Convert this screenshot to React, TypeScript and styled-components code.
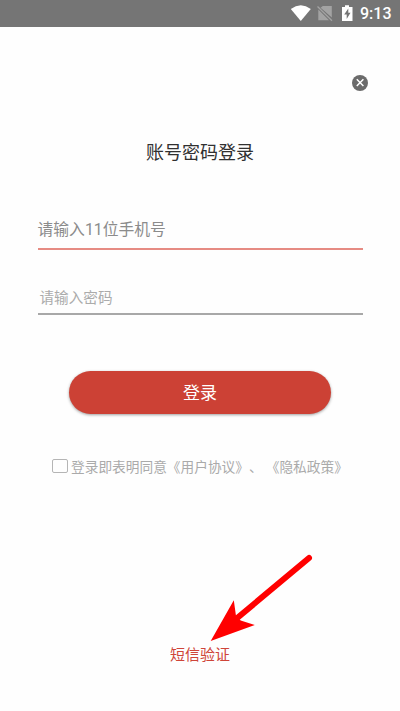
import React from "react";
import styled, { createGlobalStyle } from "styled-components";

const GlobalStyle = createGlobalStyle`
  * { box-sizing: border-box; }
  body {
    margin: 0;
    background: #fefefe;
    font-family: Roboto, "Noto Sans CJK SC", sans-serif;
    font-kerning: none;
  }
`;

const Screen = styled.div`
  position: relative;
  display: flex;
  flex-direction: column;
  width: 400px;
  height: 711px;
  overflow: hidden;
  background: #fefefe;
`;

const StatusBar = styled.header`
  display: flex;
  align-items: center;
  justify-content: flex-end;
  flex: none;
  height: 27px;
  padding-right: 9px;
  background: #757575;
`;

const StatusIcons = styled.svg`
  display: block;
  width: 68px;
  height: 27px;
`;

const Clock = styled.time`
  width: 31px;
  margin-left: 2px;
  color: #fff;
  font-size: 16px;
  font-weight: 500;
  line-height: 27px;
  white-space: nowrap;
`;

const CloseRow = styled.div`
  display: flex;
  justify-content: flex-end;
  padding: 47px 31px 0 0;
`;

const CloseButton = styled.button`
  display: block;
  width: 18px;
  height: 18px;
  padding: 0;
  border: 0;
  background: none;
`;

const Title = styled.h1`
  margin: 47px 0 0;
  color: #303030;
  font-size: 18px;
  font-weight: 400;
  line-height: 28px;
  text-align: center;
`;

const Fields = styled.form`
  display: flex;
  flex-direction: column;
  padding: 51px 37.5px 0;
`;

const Field = styled.label<{ $size: number; $ink: string; $line: string; $inset?: number; $height: number; $top?: number }>`
  display: block;
  height: ${(p) => p.$height}px;
  margin-top: ${(p) => p.$top ?? 0}px;
  padding-left: ${(p) => p.$inset ?? 0}px;
  border-bottom: 2px solid ${(p) => p.$line};
  color: ${(p) => p.$ink};
  font-size: ${(p) => p.$size}px;
  line-height: 23px;
`;

const LoginButton = styled.button`
  flex: none;
  align-self: center;
  width: 262px;
  height: 43px;
  margin-top: 56px;
  padding: 2px 0 0;
  border: 0;
  border-radius: 22px;
  background: #cc4135;
  box-shadow: 0 1px 3px rgba(0, 0, 0, 0.38);
  color: #fff;
  font-family: inherit;
  font-size: 17px;
  line-height: 41px;
`;

const Agreement = styled.div`
  display: flex;
  align-items: center;
  height: 24px;
  margin-top: 40px;
  padding-left: 52px;
  color: #aaa;
  font-size: 13.7px;
  line-height: 24px;
  white-space: nowrap;
`;

const Checkbox = styled.span`
  flex: none;
  width: 16px;
  height: 14px;
  margin-right: 3px;
  border: 1px solid #b5b5b5;
  border-radius: 2px;
`;

const AgreementText = styled.span`
  font-family: "Noto Sans CJK SC", sans-serif;
  font-feature-settings: "chws" 0, "halt" 0, "kern" 0;
  text-spacing-trim: space-all;
`;

const SmsLink = styled.a`
  align-self: center;
  margin-top: 165px;
  color: #cf4539;
  font-size: 15px;
  line-height: 24px;
`;

const Pointer = styled.svg`
  position: absolute;
  left: 200px;
  top: 545px;
  width: 120px;
  height: 105px;
  pointer-events: none;
`;

export default function App() {
  return (
    <Screen>
      <GlobalStyle />
      <StatusBar>
        <StatusIcons viewBox="0 0 68 27">
          <path d="M.8 8.900Q10.800 1.800 20.800 8.900L10.800 20.900Z" fill="#fff" />
          <path d="M32.800 6H41.800V17.600L30.600 7.800ZM28.300 9.500L39 20.300H28.300Z" fill="#a3a3a3" />
          <path d="M27.500 6.500L42 20.800" stroke="#a3a3a3" strokeWidth="1.300" />
          <path d="M52 7H55V5.200H59V7H62.500V21H52Z" fill="#fff" />
          <path d="M58.300 8.500L54.200 14.600H56.700V19L60.500 12.800H58.300Z" fill="#757575" />
        </StatusIcons>
        <Clock>9:13</Clock>
      </StatusBar>
      <CloseRow>
        <CloseButton aria-label="关闭">
          <svg width="18" height="18" viewBox="0 0 18 18" display="block">
            <circle cx="9" cy="9" r="8" fill="#6b6b6b" />
            <path d="M5.800 5.300L12.400 12M12.400 5.300L5.800 12" stroke="#fff" strokeWidth="1.500" />
          </svg>
        </CloseButton>
      </CloseRow>
      <Title>账号密码登录</Title>
      <Fields>
        <Field $size={15.8} $ink="#8b8b8b" $line="#e68b83" $height={32}>请输入11位手机号</Field>
        <Field $size={14.6} $ink="#ababab" $line="#a8a8a8" $inset={2} $height={28} $top={37}>请输入密码</Field>
      </Fields>
      <LoginButton>登录</LoginButton>
      <Agreement>
        <Checkbox />
        <AgreementText>登录即表明同意《用户协议》、 《隐私政策》</AgreementText>
      </Agreement>
      <SmsLink>短信验证</SmsLink>
      <Pointer viewBox="0 0 120 105">
        <path d="M109 13L36 74" stroke="#f00" strokeWidth="6" strokeLinecap="round" />
        <path d="M10.700 96L33.800 55.200L36 71L40.700 75.500L54.800 80Z" fill="#f00" />
      </Pointer>
    </Screen>
  );
}
